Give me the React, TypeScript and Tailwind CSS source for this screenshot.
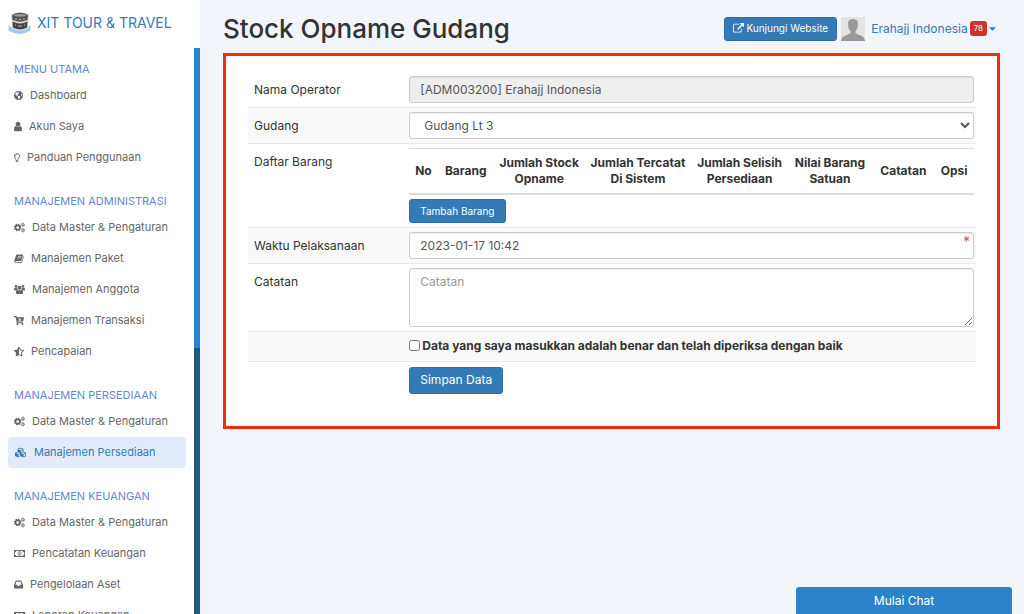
import React from 'react';
import {
  FaCaretDown,
  FaCartArrowDown,
  FaCubes,
  FaGlobeAmericas,
  FaRegLightbulb,
  FaStarHalfAlt
} from 'react-icons/fa';

interface IconProps {
  className?: string;
}

const UserIcon: React.FC<IconProps> = ({ className }) => (
  <svg viewBox="256 128 1280 1536" className={className} fill="currentColor" aria-hidden="true">
    <path d="M1536 1399q0 109-62.500 187t-150.500 78h-854q-88 0-150.500-78t-62.500-187q0-85 8.500-160.500t31.500-152 58.500-131 94-89 134.500-34.500q131 128 313 128t313-128q76 0 134.500 34.500t94 89 58.500 131 31.500 152 8.500 160.500zm-256-887q0 159-112.500 271.500t-271.500 112.500-271.500-112.500-112.500-271.500 112.500-271.500 271.500-112.500 271.500 112.500 112.500 271.500z" />
  </svg>
);

const CogsIcon: React.FC<IconProps> = ({ className }) => (
  <svg viewBox="0 0 24 22" className={className} fill="none" stroke="currentColor" aria-hidden="true">
    <circle cx="8" cy="11" r="4.800" strokeWidth="3.600" />
    <circle cx="8" cy="11" r="7" strokeWidth="2.600" strokeDasharray="3 2.498" />
    <circle cx="19.500" cy="5" r="2.500" strokeWidth="2" />
    <circle cx="19.500" cy="5" r="3.900" strokeWidth="1.400" strokeDasharray="2.100 1.984" />
    <circle cx="19.500" cy="17" r="2.500" strokeWidth="2" />
    <circle cx="19.500" cy="17" r="3.900" strokeWidth="1.400" strokeDasharray="2.100 1.984" />
  </svg>
);

const BookIcon: React.FC<IconProps> = ({ className }) => (
  <svg viewBox="0 0 20 18" className={className} aria-hidden="true">
    <path d="M6.500 1H17q1.500 0 1 1.500L15 13q-.4 1.200-1.800 1.200H3.500q-1.200 0-1 .9.200.7 1.200.7h10.800q.8 0 1.100-.9L19 4q1 .6.700 1.600l-3 10.200q-.5 1.700-2 1.700H3.300Q.8 17.500.4 15.200q-.2-1 .2-2L4 2.800Q4.600 1 6.500 1z" fill="currentColor" />
    <path d="M7.800 4.800h7M6.900 7.700h7" stroke="white" strokeWidth="1.200" />
  </svg>
);

const UsersIcon: React.FC<IconProps> = ({ className }) => (
  <svg viewBox="0 0 24 20" className={className} fill="currentColor" aria-hidden="true">
    <circle cx="4.500" cy="3.200" r="3" />
    <circle cx="19.500" cy="3.200" r="3" />
    <circle cx="12" cy="6.200" r="4.200" />
    <path d="M0 10.500Q0 6 1.800 6q2.700 1.500 5 .6Q7 9 8.500 10.200q-2 .2-3.400 1.800H2q-2 0-2-1.500zM24 10.500Q24 6 22.200 6q-2.700 1.500-5 .6-.2 2.400-1.700 3.600 2 .2 3.400 1.800H22q2 0 2-1.500z" />
    <path d="M4 17q0-6 3.500-6.200 4.500 3 9 0Q20 11 20 17q0 3-3 3H7q-3 0-3-3z" />
  </svg>
);

const MoneyIcon: React.FC<IconProps> = ({ className }) => (
  <svg viewBox="0 0 24 17" className={className} aria-hidden="true">
    <path fillRule="evenodd" d="M0 1h24v15H0zM5 2.800Q4.700 5.500 1.800 6v5q2.900.5 3.200 3.200h14q.3-2.700 3.200-3.200V6Q19.300 5.500 19 2.800z" fill="currentColor" />
    <ellipse cx="12" cy="8.500" rx="3.700" ry="4.500" fill="none" stroke="currentColor" strokeWidth="1.400" />
    <path d="M10.700 7l1.500-1v5m-1.700 0h3.200" fill="none" stroke="currentColor" strokeWidth="1.300" />
  </svg>
);

const InboxIcon: React.FC<IconProps> = ({ className }) => (
  <svg viewBox="0 0 18 16" className={className} fill="currentColor" aria-hidden="true">
    <path fillRule="evenodd" d="M4.500 0h9q1 0 1.400 1L18 8.500V15q0 1-1 1H1q-1 0-1-1V8.500L3.100 1Q3.500 0 4.500 0zM5 2.300L2.500 8.600h3.600l1.200 2.400h3.400l1.200-2.400h3.600L13 2.300z" />
  </svg>
);

interface MenuItem {
  label: string;
  icon: React.ComponentType<IconProps>;
  iconClass: string;
  active?: boolean;
}

interface MenuGroup {
  title: string;
  items: MenuItem[];
}

const menuGroups: MenuGroup[] = [
  {
    title: 'MENU UTAMA',
    items: [
      { label: 'Dashboard', icon: FaGlobeAmericas, iconClass: 'w-[9px]' },
      { label: 'Akun Saya', icon: UserIcon, iconClass: 'w-2' },
      { label: 'Panduan Penggunaan', icon: FaRegLightbulb, iconClass: 'w-[6px]' }
    ]
  },
  {
    title: 'MANAJEMEN ADMINISTRASI',
    items: [
      { label: 'Data Master & Pengaturan', icon: CogsIcon, iconClass: 'w-[11px]' },
      { label: 'Manajemen Paket', icon: BookIcon, iconClass: 'w-[10px]' },
      { label: 'Manajemen Anggota', icon: UsersIcon, iconClass: 'w-[11px]' },
      { label: 'Manajemen Transaksi', icon: FaCartArrowDown, iconClass: 'w-[10px]' },
      { label: 'Pencapaian', icon: FaStarHalfAlt, iconClass: 'w-[10px]' }
    ]
  },
  {
    title: 'MANAJEMEN PERSEDIAAN',
    items: [
      { label: 'Data Master & Pengaturan', icon: CogsIcon, iconClass: 'w-[11px]' },
      { label: 'Manajemen Persediaan', icon: FaCubes, iconClass: 'w-[13px]', active: true }
    ]
  },
  {
    title: 'MANAJEMEN KEUANGAN',
    items: [
      { label: 'Data Master & Pengaturan', icon: CogsIcon, iconClass: 'w-[11px]' },
      { label: 'Pencatatan Keuangan', icon: MoneyIcon, iconClass: 'w-[11px]' },
      { label: 'Pengelolaan Aset', icon: InboxIcon, iconClass: 'w-[9px]' },
      { label: 'Laporan Keuangan', icon: MoneyIcon, iconClass: 'w-[11px]' }
    ]
  }
];

const columns = [
  { name: 'No', width: 'w-[5%]' },
  { name: 'Barang', width: 'w-[10%]' },
  { name: 'Jumlah Stock Opname', width: 'w-[16%]' },
  { name: 'Jumlah Tercatat Di Sistem', width: 'w-[19%]' },
  { name: 'Jumlah Selisih Persediaan', width: 'w-[17%]' },
  { name: 'Nilai Barang Satuan', width: 'w-[15%]' },
  { name: 'Catatan', width: 'w-[11%]' },
  { name: 'Opsi', width: 'w-[7%]' }
];

const Logo = () => (
  <svg viewBox="0 0 24 24" className="h-6 w-6" aria-hidden="true">
    <path d="M0.5 14v5.500q11 7 22 0V14q-11 10-22 0z" fill="#9ccbf3" />
    <path d="M3 3.500q9-5 18 0l-1 14q-8 5-16 0z" fill="#dcdcdc" />
    <path d="M4 4q8-4.500 16 0l-.5 5q-7.500 3.500-15 0z" fill="#555" />
    <path d="M5 4.500q7-3 14 0-7 2.500-14 0z" fill="#999" />
    <path d="M4.500 10.500q7.500 4 15 0l-.5 6q-7 4-14 0z" fill="#444" />
    <path d="M7 8h2M11 8.500h2M15 8h2M7 14h1M10 15h4M16 14h1" stroke="#bbb" />
  </svg>
);

const ExternalLink = () => (
  <svg viewBox="0 0 1792 1792" className="size-[11px]" fill="currentColor" aria-hidden="true">
    <path d="M1408 928v320q0 119-84.500 203.500t-203.500 84.500h-832q-119 0-203.500-84.500t-84.500-203.500v-832q0-119 84.500-203.500t203.500-84.500h704q14 0 23 9t9 23v64q0 14-9 23t-23 9h-704q-66 0-113 47t-47 113v832q0 66 47 113t113 47h832q66 0 113-47t47-113v-320q0-14 9-23t23-9h64q14 0 23 9t9 23zm384-864v512q0 26-19 45t-45 19-45-19l-176-176-652 652q-10 10-23 10t-23-10l-114-114q-10-10-10-23t10-23l652-652-176-176q-19-19-19-45t19-45 45-19h512q26 0 45 19t19 45z" />
  </svg>
);

const Avatar = () => (
  <svg viewBox="0 0 24 24" className="size-6 bg-[#e4e4e4]" aria-hidden="true">
    <path d="M7 7q0-5 5-5t5 5q0 5-2.500 7v2q2 1.500 5 2.500 4 1 4.500 5.500H0q.5-4.500 4.500-5.500 3-1 5-2.500v-2Q7 12 7 7z" fill="#999" />
  </svg>
);

interface RowProps {
  label?: string;
  htmlFor?: string;
  striped?: boolean;
  children: React.ReactNode;
}

const Row: React.FC<RowProps> = ({ label, htmlFor, striped, children }) => (
  <div
    className={`flex border-t border-[#e8e8e8] px-0.5 py-1 first:border-t-0 ${
      striped ? 'bg-[#f9f9f9]' : 'bg-white'
    }`}
  >
    <label htmlFor={htmlFor} className="w-[22%] shrink-0 px-1 pt-1 text-xs leading-5">
      {label}
    </label>
    <div className="min-w-0 flex-1">{children}</div>
  </div>
);

const Sidebar = () => (
  <aside className="flex w-50 shrink-0 flex-col bg-white">
    <a href="#" className="flex h-12 shrink-0 items-center gap-[5px] pb-0.5 pl-2 text-sm whitespace-nowrap text-[#337ab7]">
      <Logo />
      XIT TOUR &amp; TRAVEL
    </a>
    <div className="flex min-h-0 flex-1">
      <nav className="min-w-0 flex-1 overflow-hidden pt-3 pr-2 pl-2">
        {menuGroups.map((group) => (
          <div key={group.title} className="mb-[19px]">
            <h2 className="px-1.5 text-[11px] leading-[18px] whitespace-nowrap text-[#6488d0]">{group.title}</h2>
            <ul className="pt-0.5">
              {group.items.map(({ label, icon: Icon, iconClass, active }) => (
                <li key={label}>
                  <a
                    href="#"
                    className={`flex h-[31px] items-center gap-[7px] rounded-[4px] px-1.5 text-[11px] whitespace-nowrap ${
                      active ? 'bg-[#e1ebf9] text-[#337ab7]' : 'text-[#666]'
                    }`}
                  >
                    <Icon className={`h-[11px] shrink-0 ${iconClass}`} />
                    {label}
                  </a>
                </li>
              ))}
            </ul>
          </div>
        ))}
      </nav>
      {/* scrollbar */}
      <div className="w-1.5 bg-[#1f5a85]">
        <div className="h-[53%] bg-[#2c83c9]" />
      </div>
    </div>
  </aside>
);

const control =
  'block w-full rounded-[3px] border border-[#ccc] px-2.5 text-xs text-[#555] shadow-[inset_0_1px_1px_rgba(0,0,0,0.075)]';

const App = () => {
  return (
    <div className="flex h-screen overflow-hidden bg-[#f2f5f9] font-['Inter',sans-serif] text-[#333]">
      <Sidebar />

      <main className="min-w-0 flex-1 pr-6 pl-[23px]">
        <header className="flex h-[53px] items-center justify-between pt-1">
          <h1 className="text-[26px] font-medium whitespace-nowrap">Stock Opname Gudang</h1>
          <div className="flex items-center gap-1 pr-1">
            <button className="flex h-6 items-center gap-0.5 rounded-[3px] border border-[#2e6da4] bg-[#337ab7] px-2 text-[10px] whitespace-nowrap text-white">
              <ExternalLink />
              Kunjungi Website
            </button>
            <Avatar />
            <a href="#" className="ml-0.5 flex items-center gap-0.5 text-xs whitespace-nowrap text-[#337ab7]">
              Erahajj Indonesia
              <span className="rounded-[3px] bg-[#cd3329] px-1 text-[8px] leading-[15px] text-white">78</span>
              <FaCaretDown className="h-[11px] w-[7px]" />
            </a>
          </div>
        </header>

        <form
          className="border-3 border-[#ec2f0b] bg-white pt-4 pr-[21px] pb-7 pl-[22px]"
          onSubmit={(e) => e.preventDefault()}
        >
          <Row label="Nama Operator" htmlFor="operator">
            <input id="operator" readOnly defaultValue="[ADM003200] Erahajj Indonesia" className={`${control} h-[27px] bg-[#eee]`} />
          </Row>
          <Row label="Gudang" htmlFor="gudang" striped>
            <select id="gudang" className={`${control} h-[27px] bg-white pr-0`}>
              <option>Gudang Lt 3</option>
            </select>
          </Row>
          <Row label="Daftar Barang">
            <table className="w-full table-fixed border-t border-b-2 border-[#ddd] text-xs leading-4">
              <thead>
                <tr>
                  {columns.map(({ name, width }) => (
                    <th key={name} scope="col" className={`px-0.5 py-[6px] text-center font-bold ${width}`}>
                      {name}
                    </th>
                  ))}
                </tr>
              </thead>
            </table>
            <button type="button" className="mt-1 h-6 rounded-[3px] border border-[#2e6da4] bg-[#337ab7] px-2.5 text-[10px] text-white">
              Tambah Barang
            </button>
          </Row>
          <Row label="Waktu Pelaksanaan" htmlFor="waktu" striped>
            <div className="relative">
              <input id="waktu" defaultValue="2023-01-17 10:42" className={`${control} h-[27px] bg-white`} />
              <span className="absolute top-0.5 right-1 text-sm leading-4 text-[#d9534f]">*</span>
            </div>
          </Row>
          <Row label="Catatan" htmlFor="catatan">
            <textarea id="catatan" placeholder="Catatan" className={`${control} h-[59px] resize-y bg-white py-1 leading-[18px] placeholder:text-[#999]`} />
          </Row>
          <Row striped>
            <label className="flex h-[21px] items-center gap-0.5 pb-0.5 text-xs font-bold whitespace-nowrap">
              <input type="checkbox" className="size-[11px]" />
              Data yang saya masukkan adalah benar dan telah diperiksa dengan baik
            </label>
          </Row>
          <Row>
            <button className="h-[27px] rounded-[3px] border border-[#2e6da4] bg-[#337ab7] px-2.5 text-xs text-white">
              Simpan Data
            </button>
          </Row>
        </form>
      </main>

      <button className="fixed right-3 bottom-0 h-[27px] w-[216px] rounded-t-[3px] bg-[#2c83c9] text-xs text-white">
        Mulai Chat
      </button>
    </div>
  );
};

export default App;
